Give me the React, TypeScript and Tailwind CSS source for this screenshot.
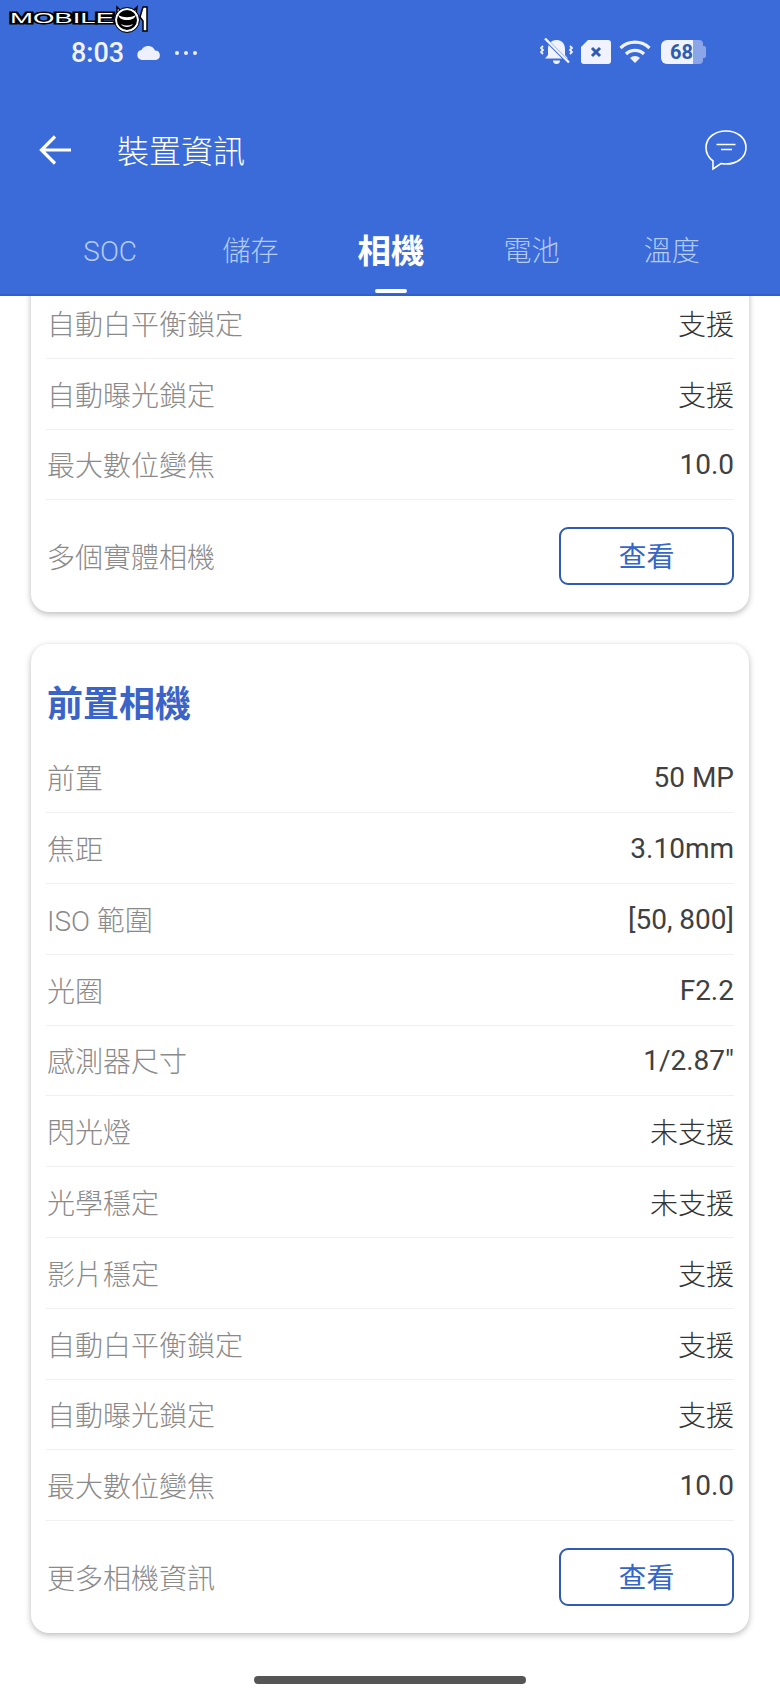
const rearRows = [
  ['自動白平衡鎖定', '支援'],
  ['自動曝光鎖定', '支援'],
  ['最大數位變焦', '10.0'],
];

const frontRows = [
  ['前置', '50 MP'],
  ['焦距', '3.10mm'],
  ['ISO 範圍', '[50, 800]'],
  ['光圈', 'F2.2'],
  ['感測器尺寸', '1/2.87"'],
  ['閃光燈', '未支援'],
  ['光學穩定', '未支援'],
  ['影片穩定', '支援'],
  ['自動白平衡鎖定', '支援'],
  ['自動曝光鎖定', '支援'],
  ['最大數位變焦', '10.0'],
];

const tabs = ['SOC', '儲存', '相機', '電池', '溫度'];

function Row({ label, value }: { label: string; value: string }) {
  const isCjk = value.includes('支援');
  return (
    <div className="flex h-[70.8px] items-center justify-between border-b border-[#f0f0f0]">
      <span className="pl-[1px] pt-[6px] text-[28px] font-light text-[#8a8a8a]">{label}</span>
      <span className={isCjk ? 'pt-[6px] text-[28px] font-light text-[#333333]' : 'pt-[2px] text-[28px] text-[#404040]'}>{value}</span>
    </div>
  );
}

function ButtonRow({ label }: { label: string }) {
  return (
    <div className="flex items-center justify-between py-[27px]">
      <span className="pl-[1px] pt-[5px] text-[28px] font-light text-[#8a8a8a]">{label}</span>
      <button className="flex h-[58px] w-[175px] items-center justify-center rounded-[9px] border-2 border-[#2f5bb0] pt-[3px] text-[28px] text-[#3566c8]">
        查看
      </button>
    </div>
  );
}

function Logo() {
  return (
    <svg width="146" height="32" viewBox="0 0 146 32" className="absolute left-[8px] top-[3px]">
      <text x="2" y="20" textLength="104" lengthAdjust="spacingAndGlyphs" fontFamily="Liberation Sans" fontSize="14" fill="#fff" stroke="#000" strokeWidth="3" paintOrder="stroke">
        MOBILE
      </text>
      <path d="M109 4l5 5h10l5-5-1 8-19 0z" fill="#fff" stroke="#000" strokeWidth="1.5" />
      <circle cx="119" cy="17" r="11" fill="#000" stroke="#fff" strokeWidth="2" />
      <circle cx="119" cy="17" r="12.500" fill="none" stroke="#000" strokeWidth="1" />
      <path d="M110 12c6 3 12 3 18 0-1 3-4 5-9 5s-8-2-9-5zM113 21c4 2 8 2 12 0-2 4-10 4-12 0z" fill="#fff" />
      <path d="M132 14l3-10h4v24h-4v-10z" fill="#fff" stroke="#000" strokeWidth="1.5" />
    </svg>
  );
}

function StatusBar() {
  return (
    <div className="flex h-[106px] items-start justify-between pl-[71px] pr-[74px] pt-[37px]">
      <div className="flex items-center gap-[13px]">
        <span className="font-['Roboto'] text-[27px] leading-[32px] font-medium text-[#f0f3fd]">8:03</span>
        <svg width="24" height="14" viewBox="0 0 24 14" fill="#eef1fb">
          <path d="M5 14a5 5 0 0 1-.6-9.900A7.500 7.500 0 0 1 18 4.500 4.800 4.800 0 0 1 19 14z" />
        </svg>
        <svg width="24" height="6" viewBox="0 0 24 6" fill="#eef1fb">
          <circle cx="3" cy="3" r="2" />
          <circle cx="12" cy="3" r="2" />
          <circle cx="21" cy="3" r="2" />
        </svg>
      </div>
      <div className="flex items-center gap-[8px] pt-[1px]">
        <svg width="33" height="28" viewBox="0 0 33 28" fill="#f0f3fd">
          <path d="M16.500 2c-6 0-8.500 4.500-8.500 9v6l-3 3.500h23l-3-3.500v-6c0-4.500-2.500-9-8.500-9zM13 22.500h7c0 2.500-1.500 3.500-3.500 3.500s-3.500-1-3.500-3.500z" />
          <path d="M6.500 2.500l21 21" stroke="#3b6bd9" strokeWidth="3.500" />
          <path d="M5 .5l24 24" stroke="#f0f3fd" strokeWidth="2.400" />
          <path d="M3 8l-2 2 2 2-2 2 2 2M30 8l2 2-2 2 2 2-2 2" fill="none" stroke="#f0f3fd" strokeWidth="1.800" />
        </svg>
        <svg width="30" height="24" viewBox="0 0 30 24">
          <path d="M7 0h20a3 3 0 0 1 3 3v18a3 3 0 0 1-3 3H3a3 3 0 0 1-3-3V7z" fill="#f0f3fd" />
          <path d="M11 8l8 8M19 8l-8 8" stroke="#2f5bb0" strokeWidth="3" />
        </svg>
        <svg width="32" height="24" viewBox="0 0 32 24" fill="none" stroke="#f0f3fd" strokeWidth="3.200">
          <path d="M1.500 8a21 21 0 0 1 29 0" />
          <path d="M7 14a13 13 0 0 1 18 0" />
          <path d="M16 23l-5-5a7 7 0 0 1 10 0z" fill="#f0f3fd" stroke="none" />
        </svg>
        <div className="ml-[2px] flex items-center">
          <div className="flex h-[24px] w-[32px] items-center justify-end rounded-l-[6px] bg-[#f0f3fd] font-['Roboto'] text-[20px] font-bold text-[#2f5bb0]">68</div>
          <div className="h-[24px] w-[10px] rounded-r-[4px] bg-[#8ba6e8]" />
          <div className="h-[12px] w-[3px] rounded-r-[2px] bg-[#8ba6e8]" />
        </div>
      </div>
    </div>
  );
}

export default function App() {
  return (
    <div className="relative flex h-[1695px] w-[780px] flex-col overflow-hidden bg-white font-['Roboto','Noto_Sans_CJK_TC',sans-serif]">
      <header className="relative z-10 h-[296px] shrink-0 border-b-2 border-[#2f60d0] bg-[#3b6bd9] text-white">
        <Logo />
        <StatusBar />
        <div className="flex h-[88px] items-center justify-between pl-[39px] pr-[33px]">
          <div className="flex items-center gap-[46px]">
            <svg width="32" height="32" viewBox="0 0 32 32" fill="none" stroke="#fff" strokeWidth="3.200">
              <path d="M32 16H3M16 2.500 2.500 16 16 29.500" />
            </svg>
            <span className="pt-[4px] text-[32px] leading-none font-light">裝置資訊</span>
          </div>
          <svg width="42" height="42" viewBox="0 0 42 42" fill="none" stroke="#fff" strokeWidth="1.600">
            <path d="M21 2c11 0 20 6.500 20 16.500S32 35 21 35c-2 0-4-.3-5-.5L8 40l0-8C4 29 1 24 1 18.500 1 8.500 10 2 21 2z" />
            <path d="M11.500 15.500h19M16 20.500h11" />
          </svg>
        </div>
        <nav className="grid grid-cols-5 pl-[40px] pr-[38px] pt-[17px]">
          {tabs.map((tab) => (
            <div key={tab} className="relative flex h-[85px] items-start justify-center pt-[16px]">
              <span
                className={
                  tab === '相機'
                    ? 'text-[33.5px] leading-[50px] font-bold text-white'
                    : 'text-[28px] leading-[50px] font-light text-[#b4cbf6]'
                }
              >
                {tab}
              </span>
              {tab === '相機' && <div className="absolute bottom-[3px] h-[4px] w-[32px] rounded-full bg-white" />}
            </div>
          ))}
        </nav>
      </header>
      <main className="flex-1 overflow-hidden px-[31px]">
        <section className="-mt-[8px] rounded-b-[18px] bg-white px-[15px] shadow-[0_2px_6px_rgba(0,0,0,0.28)]">
          {rearRows.map(([label, value]) => (
            <Row key={label} label={label} value={value} />
          ))}
          <ButtonRow label="多個實體相機" />
        </section>
        <section className="mt-[32px] rounded-[18px] bg-white px-[15px] pt-[30px] shadow-[0_2px_6px_rgba(0,0,0,0.28)]">
          <h2 className="flex h-[68px] items-center pb-[6px] pl-[1px] text-[36px] font-bold text-[#3b64c8]">前置相機</h2>
          {frontRows.map(([label, value]) => (
            <Row key={label} label={label} value={value} />
          ))}
          <ButtonRow label="更多相機資訊" />
        </section>
      </main>
      <div className="absolute bottom-[11px] left-[254px] h-[8px] w-[272px] rounded-full bg-[#555555]" />
    </div>
  );
}
